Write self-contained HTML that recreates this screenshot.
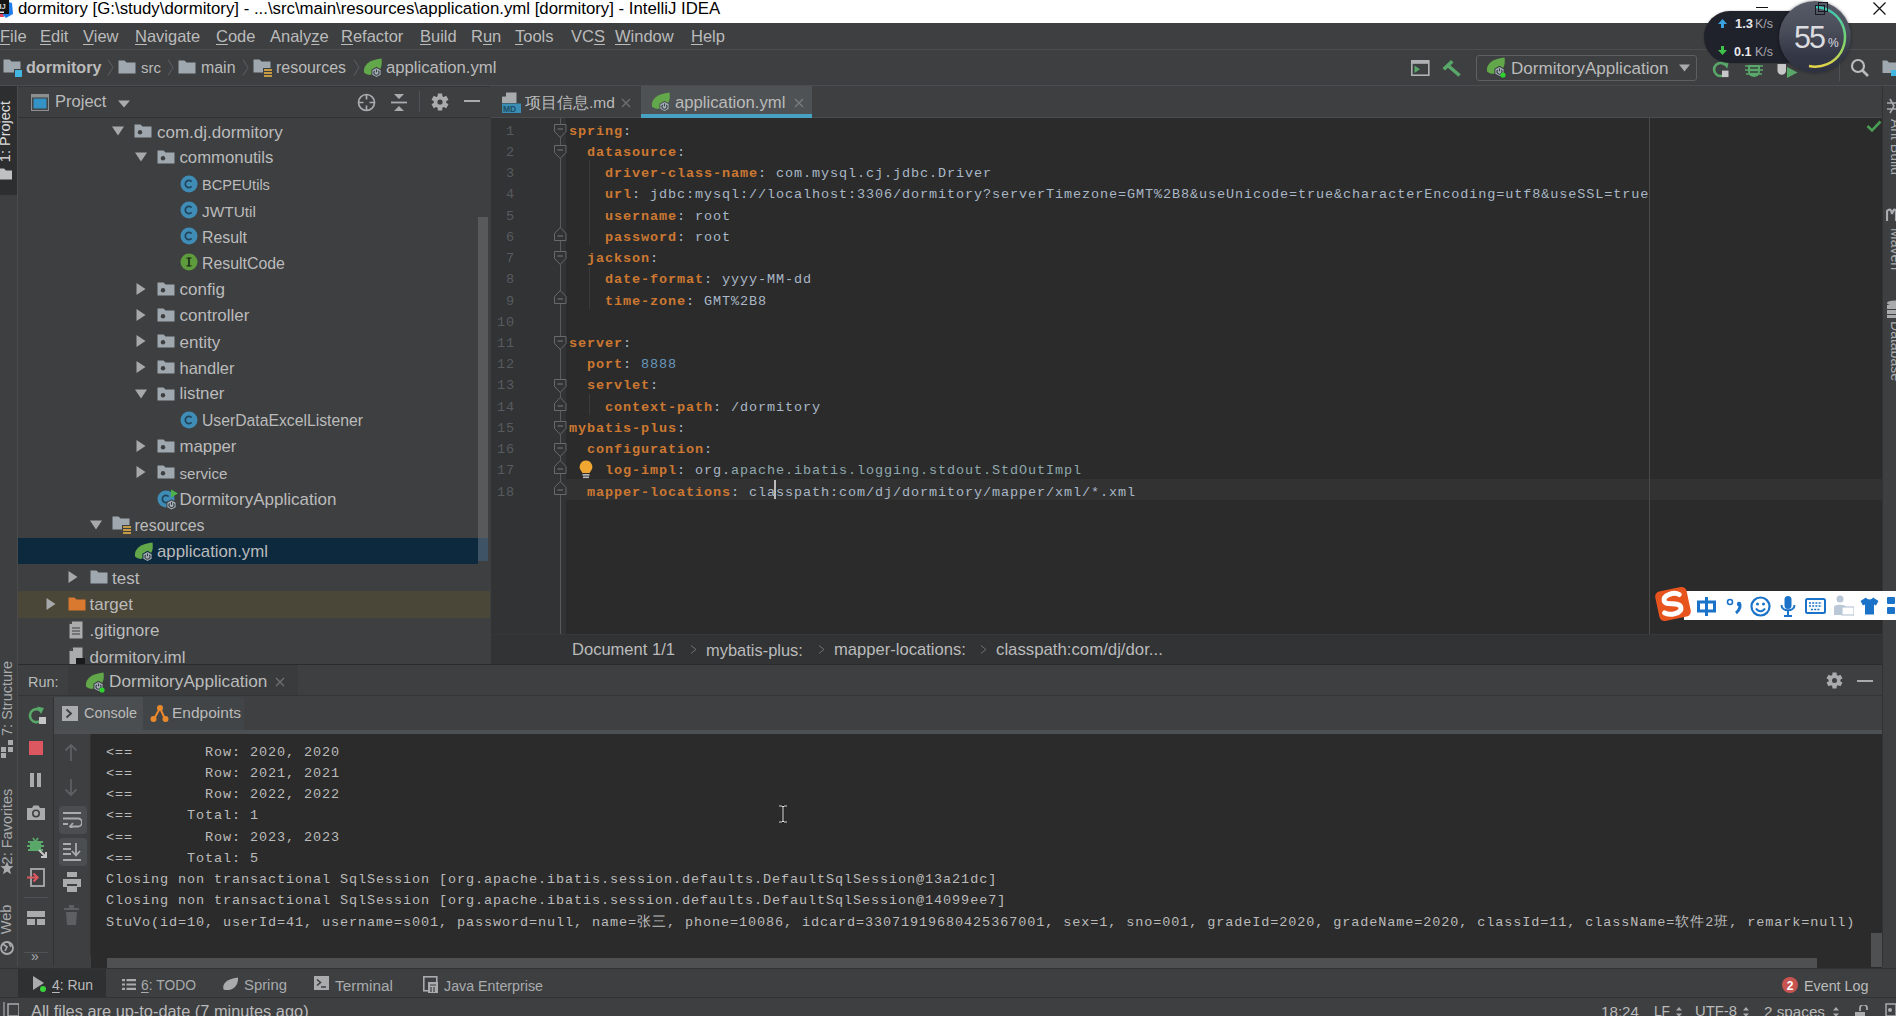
<!DOCTYPE html>
<html><head><meta charset="utf-8"><title>IntelliJ IDEA</title>
<style>
html,body{margin:0;padding:0;width:1896px;height:1016px;overflow:hidden;background:#3D3F41;font-family:"Liberation Sans",sans-serif;}
.a{position:absolute;display:block;}
.t{position:absolute;white-space:pre;}
u{text-decoration:underline;text-decoration-thickness:1px;text-underline-offset:1.5px;}
</style></head><body>
<div class="a" style="left:0px;top:0px;width:1896px;height:23px;background:#FFFFFF;"></div><div class="t" style="left:18px;top:0.78px;font-size:16.8px;line-height:16.8px;color:#000000;font-family:'Liberation Sans',sans-serif;font-weight:normal;">dormitory [G:\study\dormitory] - ...\src\main\resources\application.yml [dormitory] - IntelliJ IDEA</div><svg class="a" style="left:0px;top:0px;" width="14" height="19" viewBox="0 0 14 19"><path d="M0 14 L3 13 L4 17 L0 17 Z" fill="#E0405A"/><path d="M5 1 L12 3 L13 14 L6 18 L3 15 Z" fill="#1F7CE8"/><rect x="0" y="0" width="9" height="14" fill="#141414"/><text x="-0.5" y="8.5" font-size="7.5" font-family="Liberation Sans" font-weight="bold" fill="#DDDDDD">IJ</text><rect x="0" y="11.5" width="4" height="1.5" fill="#EEEEEE"/></svg><div class="a" style="left:1756px;top:7px;width:12px;height:1px;background:#111;"></div><svg class="a" style="left:1815px;top:3px;" width="13" height="12" viewBox="0 0 13 12"><rect x="3" y="0.5" width="9" height="9" fill="none" stroke="#111"/><rect x="0.5" y="2.5" width="9" height="9" fill="#fff" stroke="#111"/></svg><svg class="a" style="left:1872px;top:1px;" width="15" height="15" viewBox="0 0 15 15"><path d="M1.5 1.5 L13.5 13.5 M13.5 1.5 L1.5 13.5" stroke="#111" stroke-width="1.2"/></svg><div class="a" style="left:0px;top:23px;width:1896px;height:27px;background:#3D3F41;"></div><div class="a" style="left:0px;top:49px;width:1896px;height:1px;background:#4B4D4F;"></div><div class="t" style="left:0px;top:28.03px;font-size:16.5px;line-height:16.5px;color:#BBBBBB;font-family:'Liberation Sans',sans-serif;font-weight:normal;"><u>F</u>ile</div><div class="t" style="left:40px;top:28.03px;font-size:16.5px;line-height:16.5px;color:#BBBBBB;font-family:'Liberation Sans',sans-serif;font-weight:normal;"><u>E</u>dit</div><div class="t" style="left:83px;top:28.03px;font-size:16.5px;line-height:16.5px;color:#BBBBBB;font-family:'Liberation Sans',sans-serif;font-weight:normal;"><u>V</u>iew</div><div class="t" style="left:135px;top:28.03px;font-size:16.5px;line-height:16.5px;color:#BBBBBB;font-family:'Liberation Sans',sans-serif;font-weight:normal;"><u>N</u>avigate</div><div class="t" style="left:216px;top:28.03px;font-size:16.5px;line-height:16.5px;color:#BBBBBB;font-family:'Liberation Sans',sans-serif;font-weight:normal;"><u>C</u>ode</div><div class="t" style="left:270px;top:28.03px;font-size:16.5px;line-height:16.5px;color:#BBBBBB;font-family:'Liberation Sans',sans-serif;font-weight:normal;">Analy<u>z</u>e</div><div class="t" style="left:341px;top:28.03px;font-size:16.5px;line-height:16.5px;color:#BBBBBB;font-family:'Liberation Sans',sans-serif;font-weight:normal;"><u>R</u>efactor</div><div class="t" style="left:420px;top:28.03px;font-size:16.5px;line-height:16.5px;color:#BBBBBB;font-family:'Liberation Sans',sans-serif;font-weight:normal;"><u>B</u>uild</div><div class="t" style="left:471px;top:28.03px;font-size:16.5px;line-height:16.5px;color:#BBBBBB;font-family:'Liberation Sans',sans-serif;font-weight:normal;">R<u>u</u>n</div><div class="t" style="left:515px;top:28.03px;font-size:16.5px;line-height:16.5px;color:#BBBBBB;font-family:'Liberation Sans',sans-serif;font-weight:normal;"><u>T</u>ools</div><div class="t" style="left:571px;top:28.03px;font-size:16.5px;line-height:16.5px;color:#BBBBBB;font-family:'Liberation Sans',sans-serif;font-weight:normal;">VC<u>S</u></div><div class="t" style="left:615px;top:28.03px;font-size:16.5px;line-height:16.5px;color:#BBBBBB;font-family:'Liberation Sans',sans-serif;font-weight:normal;"><u>W</u>indow</div><div class="t" style="left:691px;top:28.03px;font-size:16.5px;line-height:16.5px;color:#BBBBBB;font-family:'Liberation Sans',sans-serif;font-weight:normal;"><u>H</u>elp</div><div class="a" style="left:0px;top:50px;width:1896px;height:36px;background:#3D3F41;"></div><div class="a" style="left:0px;top:85px;width:1896px;height:1px;background:#4A4D4F;"></div><svg class="a" style="left:3px;top:59px;" width="20" height="18" viewBox="0 0 20 18"><path d="M0.5 0.5 H6.5 L8.5 2.5 H17.5 V13.5 H0.5 Z" fill="#9FA8AE"/><rect x="11" y="10" width="8" height="8" fill="#3D3F41"/><rect x="12" y="11" width="7" height="7" fill="#40B6E0"/></svg><div class="t" style="left:26px;top:59.31px;font-size:16.177849203160573px;line-height:16.177849203160573px;color:#BBBBBB;font-family:'Liberation Sans',sans-serif;font-weight:bold;">dormitory</div><svg class="a" style="left:107px;top:59px;" width="7" height="17" viewBox="0 0 7 17"><path d="M1 0.5 L6 8.5 L1 16.5" fill="none" stroke="#5E6163" stroke-width="1"/></svg><svg class="a" style="left:118px;top:58.5px;" width="18" height="16" viewBox="0 0 18 16"><path d="M0.5 1.5 H6.5 L8.5 3.5 H17.5 V14.5 H0.5 Z" fill="#9FA8AE"/></svg><div class="t" style="left:141px;top:60.30px;font-size:15.004102684327746px;line-height:15.004102684327746px;color:#BBBBBB;font-family:'Liberation Sans',sans-serif;font-weight:normal;">src</div><svg class="a" style="left:167px;top:59px;" width="7" height="17" viewBox="0 0 7 17"><path d="M1 0.5 L6 8.5 L1 16.5" fill="none" stroke="#5E6163" stroke-width="1"/></svg><svg class="a" style="left:178px;top:58.5px;" width="18" height="16" viewBox="0 0 18 16"><path d="M0.5 1.5 H6.5 L8.5 3.5 H17.5 V14.5 H0.5 Z" fill="#9FA8AE"/></svg><div class="t" style="left:201px;top:59.53px;font-size:15.91810251604066px;line-height:15.91810251604066px;color:#BBBBBB;font-family:'Liberation Sans',sans-serif;font-weight:normal;">main</div><svg class="a" style="left:242px;top:59px;" width="7" height="17" viewBox="0 0 7 17"><path d="M1 0.5 L6 8.5 L1 16.5" fill="none" stroke="#5E6163" stroke-width="1"/></svg><svg class="a" style="left:253px;top:59px;" width="20" height="18" viewBox="0 0 20 18"><path d="M0.5 0.5 H6.5 L8.5 2.5 H17.5 V13.5 H0.5 Z" fill="#9FA8AE"/><rect x="10" y="9" width="10" height="9" fill="#3D3F41"/><rect x="11" y="10" width="8" height="2" fill="#C49A45"/><rect x="11" y="13" width="8" height="2" fill="#C49A45"/><rect x="11" y="16" width="8" height="2" fill="#C49A45"/></svg><div class="t" style="left:276px;top:59.50px;font-size:15.944195316392625px;line-height:15.944195316392625px;color:#BBBBBB;font-family:'Liberation Sans',sans-serif;font-weight:normal;">resources</div><svg class="a" style="left:353px;top:59px;" width="7" height="17" viewBox="0 0 7 17"><path d="M1 0.5 L6 8.5 L1 16.5" fill="none" stroke="#5E6163" stroke-width="1"/></svg><svg class="a" style="left:363px;top:58px;" width="20" height="21" viewBox="0 0 20 21"><path d="M1 14.5 C0 7 6 2 18.5 0.5 C19.5 7 18 12 13.5 15 C9.5 17.5 4 17.5 1 14.5 Z" fill="#62A84A"/><path d="M13.5 8.8 L18.6 11.7 V17.3 L13.5 20.2 L8.4 17.3 V11.7 Z" fill="#3D3F41"/><path d="M13.5 10 L17.6 12.3 V16.7 L13.5 19 L9.4 16.7 V12.3 Z" fill="#A3AEB6"/><path d="M11.7 12.9 A2.5 2.5 0 1 0 15.3 12.9" fill="none" stroke="#3A4046" stroke-width="1.1"/><path d="M13.5 11.4 V14.3" stroke="#3A4046" stroke-width="1.1"/></svg><div class="t" style="left:386px;top:59.86px;font-size:16.70722199910227px;line-height:16.70722199910227px;color:#BBBBBB;font-family:'Liberation Sans',sans-serif;font-weight:normal;">application.yml</div><svg class="a" style="left:1411px;top:60px;" width="19" height="16" viewBox="0 0 19 16"><rect x="0.8" y="0.8" width="17" height="14.4" fill="none" stroke="#AFB1B3" stroke-width="1.6"/><rect x="0.8" y="0.8" width="17" height="3" fill="#AFB1B3"/><path d="M3.5 5.5 L9 9.3 L3.5 13 Z" fill="#59A869"/></svg><svg class="a" style="left:1441px;top:57px;" width="21" height="21" viewBox="0 0 21 21"><path d="M1.5 11 L10 3 L12.5 5.5 L4 13.5 Z" fill="#59A869"/><path d="M7 8.5 L18.5 18.5" stroke="#59A869" stroke-width="3.6"/></svg><div class="a" style="left:1476px;top:55px;width:221px;height:26px;border:1px solid #5E6060;border-radius:3px;box-sizing:border-box;background:#3D3F41"></div><svg class="a" style="left:1486px;top:57px;" width="20" height="21" viewBox="0 0 20 21"><path d="M1 14.5 C0 7 6 2 18.5 0.5 C19.5 7 18 12 13.5 15 C9.5 17.5 4 17.5 1 14.5 Z" fill="#62A84A"/><path d="M13.5 8.8 L18.6 11.7 V17.3 L13.5 20.2 L8.4 17.3 V11.7 Z" fill="#3D3F41"/><path d="M13.5 10 L17.6 12.3 V16.7 L13.5 19 L9.4 16.7 V12.3 Z" fill="#A3AEB6"/><path d="M11.7 12.9 A2.5 2.5 0 1 0 15.3 12.9" fill="none" stroke="#3A4046" stroke-width="1.1"/><path d="M13.5 11.4 V14.3" stroke="#3A4046" stroke-width="1.1"/><circle cx="17" cy="18" r="2.6" fill="#2FD12F"/></svg><div class="t" style="left:1511px;top:59.55px;font-size:17.0728815568842px;line-height:17.0728815568842px;color:#BBBBBB;font-family:'Liberation Sans',sans-serif;font-weight:normal;">DormitoryApplication</div><svg class="a" style="left:1679px;top:64px;" width="11" height="8" viewBox="0 0 11 8"><path d="M0 0.5 H11 L5.5 7.5 Z" fill="#A9ABAD"/></svg><svg class="a" style="left:1711px;top:60px;" width="20" height="20" viewBox="0 0 20 20"><path d="M14.2 4.9 A6.5 6.5 0 1 0 14.2 14.1" fill="none" stroke="#59A869" stroke-width="2.6"/><path d="M10.5 1.5 L17.8 1.8 L16.2 8.8 Z" fill="#59A869"/><rect x="11" y="10.6" width="6.5" height="6.5" fill="#C8C8C8"/></svg><svg class="a" style="left:1745px;top:63px;" width="18" height="15" viewBox="0 0 18 15"><path d="M3 2 H15 V8 A6 6 0 0 1 3 8 Z" fill="#59A869"/><path d="M0 3 H18 M0 7 H18 M1 11 H17" stroke="#59A869" stroke-width="1.6"/><path d="M5 5 H13 M5 9 H13" stroke="#3D3F41" stroke-width="1.5"/></svg><svg class="a" style="left:1777px;top:63px;" width="21" height="16" viewBox="0 0 21 16"><path d="M0.5 1 H9 V7.5 A4.25 4.25 0 0 1 0.5 7.5 Z" fill="#C8C8C8"/><path d="M10 4 L20.5 9.5 L10 15 Z" fill="#59A869"/></svg><div class="a" style="left:1839px;top:57px;width:1px;height:24px;background:#505355;"></div><svg class="a" style="left:1850px;top:58px;" width="20" height="20" viewBox="0 0 20 20"><circle cx="8" cy="8" r="6" fill="none" stroke="#BBBBBB" stroke-width="2.2"/><path d="M12.5 12.5 L18 18" stroke="#BBBBBB" stroke-width="2.6"/></svg><svg class="a" style="left:1882px;top:60px;" width="14" height="18" viewBox="0 0 14 18"><path d="M0.5 0.5 H5 L7 2.5 H14 V13 H0.5 Z" fill="#9FA8AE"/><rect x="9" y="10" width="5" height="6" fill="#40B6E0"/></svg><div class="a" style="left:0px;top:86px;width:17px;height:880px;background:#3D3F41;"></div><div class="a" style="left:17px;top:86px;width:1px;height:880px;background:#4A4C4E;"></div><div class="a" style="left:0px;top:86px;width:17px;height:109px;background:#2C2E30;"></div><div class="t" style="left:-35px;top:123px;width:80px;height:17px;transform:rotate(-90deg);font-size:14.5px;line-height:17px;color:#DDDDDD;text-align:center">1: Project</div><svg class="a" style="left:0px;top:168px;" width="12" height="12" viewBox="0 0 12 12"><path d="M0 0.5 H4 L6 2.5 H12 V11.5 H0 Z" fill="#BEC0C2"/></svg><div class="t" style="left:-43.5px;top:690px;width:100px;height:17px;transform:rotate(-90deg);font-size:14.5px;line-height:17px;color:#A9ABAD;text-align:center">7: Structure</div><svg class="a" style="left:1px;top:739px;" width="12" height="19" viewBox="0 0 12 19"><rect x="7" y="1" width="5" height="5" fill="#A9ABAD"/><rect x="0" y="8" width="5" height="5" fill="#A9ABAD"/><rect x="7" y="8" width="5" height="5" fill="#A9ABAD"/><rect x="0" y="14" width="5" height="5" fill="#A9ABAD"/></svg><div class="t" style="left:-43.5px;top:818px;width:100px;height:17px;transform:rotate(-90deg);font-size:14.5px;line-height:17px;color:#A9ABAD;text-align:center">2: Favorites</div><svg class="a" style="left:0px;top:861px;" width="14" height="14" viewBox="0 0 14 14"><path d="M7 0.5 L8.8 5 L13.5 5.2 L9.8 8.2 L11 13.2 L7 10.5 L3 13.2 L4.2 8.2 L0.5 5.2 L5.2 5 Z" fill="#A9ABAD"/></svg><div class="t" style="left:-24.5px;top:911px;width:60px;height:17px;transform:rotate(-90deg);font-size:14.5px;line-height:17px;color:#A9ABAD;text-align:center">Web</div><svg class="a" style="left:0px;top:940px;" width="14" height="16" viewBox="0 0 14 16"><circle cx="7" cy="8" r="6" fill="none" stroke="#A9ABAD" stroke-width="1.8"/><path d="M3 4 L7 7 L5 11 M9 3 L11 7" stroke="#A9ABAD" stroke-width="1.6" fill="none"/></svg><div class="a" style="left:1882px;top:86px;width:14px;height:880px;background:#3D3F41;"></div><div class="a" style="left:1882px;top:86px;width:1px;height:880px;background:#323232;"></div><div class="t" style="left:1856px;top:139px;width:80px;height:16px;transform:rotate(90deg);font-size:14px;line-height:16px;color:#A9ABAD;text-align:center">Ant Build</div><div class="t" style="left:1866px;top:241px;width:60px;height:16px;transform:rotate(90deg);font-size:14px;line-height:16px;color:#A9ABAD;text-align:center">Maven</div><div class="t" style="left:1856px;top:343px;width:80px;height:16px;transform:rotate(90deg);font-size:14px;line-height:16px;color:#A9ABAD;text-align:center">Database</div><svg class="a" style="left:1886px;top:98px;" width="10" height="16" viewBox="0 0 10 16"><path d="M4 1 L8 8 L4 15 M1 5 H10 M1 11 H10" stroke="#A9ABAD" stroke-width="1.6" fill="none"/></svg><svg class="a" style="left:1886px;top:208px;" width="10" height="14" viewBox="0 0 10 14"><path d="M1 13 V3 Q5 -1 6 6 Q8 -1 10 3 V13" stroke="#A9ABAD" stroke-width="2.2" fill="none"/></svg><svg class="a" style="left:1886px;top:300px;" width="10" height="18" viewBox="0 0 10 18"><ellipse cx="9" cy="3" rx="8" ry="2.5" fill="#A9ABAD"/><rect x="1" y="5" width="9" height="4" fill="#A9ABAD"/><rect x="1" y="10" width="9" height="4" fill="#A9ABAD"/><rect x="1" y="15" width="9" height="3" fill="#A9ABAD"/></svg><div class="a" style="left:18px;top:86px;width:472px;height:578px;background:#3D3F41;"></div><div class="a" style="left:18px;top:86px;width:472px;height:1px;background:#333537;"></div><div class="a" style="left:18px;top:117px;width:472px;height:1px;background:#323232;"></div><svg class="a" style="left:31px;top:94px;" width="18" height="17" viewBox="0 0 18 17"><rect x="0.5" y="0.5" width="17" height="16" fill="none" stroke="#8C8E90" stroke-width="1.2"/><rect x="1" y="1" width="16" height="2.5" fill="#8C8E90"/><rect x="2.5" y="4.5" width="13" height="10" fill="#3592C4"/></svg><div class="t" style="left:55px;top:93.99px;font-size:16.547846169294104px;line-height:16.547846169294104px;color:#BBBBBB;font-family:'Liberation Sans',sans-serif;font-weight:normal;">Project</div><svg class="a" style="left:118px;top:100px;" width="12" height="8" viewBox="0 0 12 8"><path d="M0 0.5 H12 L6 7.5 Z" fill="#A9ABAD"/></svg><svg class="a" style="left:357px;top:93px;" width="19" height="19" viewBox="0 0 19 19"><circle cx="9.5" cy="9.5" r="8" fill="none" stroke="#A9ABAD" stroke-width="1.7"/><path d="M9.5 2 V6.5 M9.5 12.5 V17 M2 9.5 H6.5 M12.5 9.5 H17" stroke="#A9ABAD" stroke-width="1.7"/></svg><svg class="a" style="left:391px;top:93px;" width="16" height="19" viewBox="0 0 16 19"><path d="M0 9.5 H16" stroke="#A9ABAD" stroke-width="1.8"/><path d="M3 1 H13 L8 6 Z M3 18 H13 L8 13 Z" fill="#A9ABAD"/></svg><div class="a" style="left:419px;top:91px;width:1px;height:21px;background:#505355;"></div><svg class="a" style="left:431px;top:93px;" width="18" height="18" viewBox="0 0 18 18"><path d="M6.63 3.27 L6.81 0.48 L11.19 0.48 L11.37 3.27 L12.77 4.08 L15.29 2.84 L17.48 6.63 L15.15 8.19 L15.15 9.81 L17.48 11.37 L15.29 15.16 L12.77 13.92 L11.37 14.73 L11.19 17.52 L6.81 17.52 L6.63 14.73 L5.23 13.92 L2.71 15.16 L0.52 11.37 L2.85 9.81 L2.85 8.19 L0.52 6.63 L2.71 2.84 L5.23 4.08 Z" fill="#A9ABAD"/><circle cx="9" cy="9" r="2.6" fill="#3D3F41"/></svg><div class="a" style="left:464px;top:100px;width:16px;height:2px;background:#A9ABAD;"></div><div class="a" style="left:18px;top:538.0px;width:460px;height:26px;background:#0D293E;"></div><div class="a" style="left:18px;top:590.5px;width:472px;height:27px;background:#4A4638;"></div><div class="a" style="left:478px;top:217px;width:10px;height:343px;background:#57595B;"></div><div class="a" style="left:478px;top:538.0px;width:10px;height:23px;background:#3E5366;"></div><svg class="a" style="left:112.0px;top:126.0px;" width="12" height="10" viewBox="0 0 12 10"><path d="M0 0.5 H12 L6 9.5 Z" fill="#A6A8AA"/></svg><svg class="a" style="left:134.0px;top:123.0px;" width="18" height="16" viewBox="0 0 18 16"><path d="M0.5 1.5 H6.5 L8.5 3.5 H17.5 V14.5 H0.5 Z" fill="#9FA8AE"/><circle cx="6" cy="9.2" r="2.2" fill="#3D3F41"/></svg><div class="t" style="left:157.0px;top:123.61px;font-size:17px;line-height:17px;color:#BBBBBB;font-family:'Liberation Sans',sans-serif;font-weight:normal;">com.dj.dormitory</div><svg class="a" style="left:134.5px;top:152.25px;" width="12" height="10" viewBox="0 0 12 10"><path d="M0 0.5 H12 L6 9.5 Z" fill="#A6A8AA"/></svg><svg class="a" style="left:156.5px;top:149.25px;" width="18" height="16" viewBox="0 0 18 16"><path d="M0.5 1.5 H6.5 L8.5 3.5 H17.5 V14.5 H0.5 Z" fill="#9FA8AE"/><circle cx="6" cy="9.2" r="2.2" fill="#3D3F41"/></svg><div class="t" style="left:179.5px;top:150.07px;font-size:16.748329621380847px;line-height:16.748329621380847px;color:#BBBBBB;font-family:'Liberation Sans',sans-serif;font-weight:normal;">commonutils</div><svg class="a" style="left:180.0px;top:174.5px;" width="18" height="18" viewBox="0 0 18 18"><circle cx="9" cy="9" r="8.5" fill="#3F8DB6"/><path d="M11.6 6.6 A3.6 3.6 0 1 0 11.6 11.4" fill="none" stroke="#21445A" stroke-width="1.7"/></svg><div class="t" style="left:202.0px;top:178.17px;font-size:14.568339303049576px;line-height:14.568339303049576px;color:#BBBBBB;font-family:'Liberation Sans',sans-serif;font-weight:normal;">BCPEUtils</div><svg class="a" style="left:180.0px;top:200.75px;" width="18" height="18" viewBox="0 0 18 18"><circle cx="9" cy="9" r="8.5" fill="#3F8DB6"/><path d="M11.6 6.6 A3.6 3.6 0 1 0 11.6 11.4" fill="none" stroke="#21445A" stroke-width="1.7"/></svg><div class="t" style="left:202.0px;top:203.69px;font-size:15.432705188889882px;line-height:15.432705188889882px;color:#BBBBBB;font-family:'Liberation Sans',sans-serif;font-weight:normal;">JWTUtil</div><svg class="a" style="left:180.0px;top:227.0px;" width="18" height="18" viewBox="0 0 18 18"><circle cx="9" cy="9" r="8.5" fill="#3F8DB6"/><path d="M11.6 6.6 A3.6 3.6 0 1 0 11.6 11.4" fill="none" stroke="#21445A" stroke-width="1.7"/></svg><div class="t" style="left:202.0px;top:229.56px;font-size:15.876515986769569px;line-height:15.876515986769569px;color:#BBBBBB;font-family:'Liberation Sans',sans-serif;font-weight:normal;">Result</div><svg class="a" style="left:180.0px;top:253.25px;" width="18" height="18" viewBox="0 0 18 18"><circle cx="9" cy="9" r="8.5" fill="#5E9B3C"/><rect x="8" y="4.5" width="2" height="9" fill="#233A1A"/><rect x="6.5" y="4.5" width="5" height="1.3" fill="#233A1A"/><rect x="6.5" y="12.2" width="5" height="1.3" fill="#233A1A"/></svg><div class="t" style="left:202.0px;top:255.80px;font-size:15.885642513233051px;line-height:15.885642513233051px;color:#BBBBBB;font-family:'Liberation Sans',sans-serif;font-weight:normal;">ResultCode</div><svg class="a" style="left:135.5px;top:282.5px;" width="10" height="12" viewBox="0 0 10 12"><path d="M0.5 0 V12 L9.5 6 Z" fill="#A6A8AA"/></svg><svg class="a" style="left:156.5px;top:280.5px;" width="18" height="16" viewBox="0 0 18 16"><path d="M0.5 1.5 H6.5 L8.5 3.5 H17.5 V14.5 H0.5 Z" fill="#9FA8AE"/><circle cx="6" cy="9.2" r="2.2" fill="#3D3F41"/></svg><div class="t" style="left:179.5px;top:281.11px;font-size:17px;line-height:17px;color:#BBBBBB;font-family:'Liberation Sans',sans-serif;font-weight:normal;">config</div><svg class="a" style="left:135.5px;top:308.75px;" width="10" height="12" viewBox="0 0 10 12"><path d="M0.5 0 V12 L9.5 6 Z" fill="#A6A8AA"/></svg><svg class="a" style="left:156.5px;top:306.75px;" width="18" height="16" viewBox="0 0 18 16"><path d="M0.5 1.5 H6.5 L8.5 3.5 H17.5 V14.5 H0.5 Z" fill="#9FA8AE"/><circle cx="6" cy="9.2" r="2.2" fill="#3D3F41"/></svg><div class="t" style="left:179.5px;top:307.36px;font-size:17px;line-height:17px;color:#BBBBBB;font-family:'Liberation Sans',sans-serif;font-weight:normal;">controller</div><svg class="a" style="left:135.5px;top:335.0px;" width="10" height="12" viewBox="0 0 10 12"><path d="M0.5 0 V12 L9.5 6 Z" fill="#A6A8AA"/></svg><svg class="a" style="left:156.5px;top:333.0px;" width="18" height="16" viewBox="0 0 18 16"><path d="M0.5 1.5 H6.5 L8.5 3.5 H17.5 V14.5 H0.5 Z" fill="#9FA8AE"/><circle cx="6" cy="9.2" r="2.2" fill="#3D3F41"/></svg><div class="t" style="left:179.5px;top:333.61px;font-size:17px;line-height:17px;color:#BBBBBB;font-family:'Liberation Sans',sans-serif;font-weight:normal;">entity</div><svg class="a" style="left:135.5px;top:361.25px;" width="10" height="12" viewBox="0 0 10 12"><path d="M0.5 0 V12 L9.5 6 Z" fill="#A6A8AA"/></svg><svg class="a" style="left:156.5px;top:359.25px;" width="18" height="16" viewBox="0 0 18 16"><path d="M0.5 1.5 H6.5 L8.5 3.5 H17.5 V14.5 H0.5 Z" fill="#9FA8AE"/><circle cx="6" cy="9.2" r="2.2" fill="#3D3F41"/></svg><div class="t" style="left:179.5px;top:360.29px;font-size:16.488664043470116px;line-height:16.488664043470116px;color:#BBBBBB;font-family:'Liberation Sans',sans-serif;font-weight:normal;">handler</div><svg class="a" style="left:134.5px;top:388.5px;" width="12" height="10" viewBox="0 0 12 10"><path d="M0 0.5 H12 L6 9.5 Z" fill="#A6A8AA"/></svg><svg class="a" style="left:156.5px;top:385.5px;" width="18" height="16" viewBox="0 0 18 16"><path d="M0.5 1.5 H6.5 L8.5 3.5 H17.5 V14.5 H0.5 Z" fill="#9FA8AE"/><circle cx="6" cy="9.2" r="2.2" fill="#3D3F41"/></svg><div class="t" style="left:179.5px;top:386.22px;font-size:16.87071641965907px;line-height:16.87071641965907px;color:#BBBBBB;font-family:'Liberation Sans',sans-serif;font-weight:normal;">listner</div><svg class="a" style="left:180.0px;top:410.75px;" width="18" height="18" viewBox="0 0 18 18"><circle cx="9" cy="9" r="8.5" fill="#3F8DB6"/><path d="M11.6 6.6 A3.6 3.6 0 1 0 11.6 11.4" fill="none" stroke="#21445A" stroke-width="1.7"/></svg><div class="t" style="left:202.0px;top:413.42px;font-size:15.744037159839259px;line-height:15.744037159839259px;color:#BBBBBB;font-family:'Liberation Sans',sans-serif;font-weight:normal;">UserDataExcelListener</div><svg class="a" style="left:135.5px;top:440.0px;" width="10" height="12" viewBox="0 0 10 12"><path d="M0.5 0 V12 L9.5 6 Z" fill="#A6A8AA"/></svg><svg class="a" style="left:156.5px;top:438.0px;" width="18" height="16" viewBox="0 0 18 16"><path d="M0.5 1.5 H6.5 L8.5 3.5 H17.5 V14.5 H0.5 Z" fill="#9FA8AE"/><circle cx="6" cy="9.2" r="2.2" fill="#3D3F41"/></svg><div class="t" style="left:179.5px;top:438.77px;font-size:16.81260945709282px;line-height:16.81260945709282px;color:#BBBBBB;font-family:'Liberation Sans',sans-serif;font-weight:normal;">mapper</div><svg class="a" style="left:135.5px;top:466.25px;" width="10" height="12" viewBox="0 0 10 12"><path d="M0.5 0 V12 L9.5 6 Z" fill="#A6A8AA"/></svg><svg class="a" style="left:156.5px;top:464.25px;" width="18" height="16" viewBox="0 0 18 16"><path d="M0.5 1.5 H6.5 L8.5 3.5 H17.5 V14.5 H0.5 Z" fill="#9FA8AE"/><circle cx="6" cy="9.2" r="2.2" fill="#3D3F41"/></svg><div class="t" style="left:179.5px;top:466.42px;font-size:15.15465443244043px;line-height:15.15465443244043px;color:#BBBBBB;font-family:'Liberation Sans',sans-serif;font-weight:normal;">service</div><svg class="a" style="left:156.5px;top:488.5px;" width="22" height="22" viewBox="0 0 22 22"><circle cx="9" cy="10" r="8.5" fill="#3F8DB6"/><path d="M11.6 7.6 A3.6 3.6 0 1 0 11.6 12.4" fill="none" stroke="#21445A" stroke-width="1.7"/><path d="M14 0.5 L21 4.5 L14 8.5 Z" fill="#4CB34C"/><path d="M14.5 10.3 L19.6 13.2 V18.8 L14.5 21.7 L9.4 18.8 V13.2 Z" fill="#3D3F41"/><path d="M14.5 11.5 L18.6 13.8 V18.2 L14.5 20.5 L10.4 18.2 V13.8 Z" fill="#A3AEB6"/><path d="M12.7 14.4 A2.5 2.5 0 1 0 16.3 14.4" fill="none" stroke="#3A4046" stroke-width="1.1"/><path d="M14.5 12.9 V15.8" stroke="#3A4046" stroke-width="1.1"/></svg><div class="t" style="left:179.5px;top:491.11px;font-size:17px;line-height:17px;color:#BBBBBB;font-family:'Liberation Sans',sans-serif;font-weight:normal;">DormitoryApplication</div><svg class="a" style="left:89.5px;top:519.75px;" width="12" height="10" viewBox="0 0 12 10"><path d="M0 0.5 H12 L6 9.5 Z" fill="#A6A8AA"/></svg><svg class="a" style="left:111.5px;top:515.75px;" width="20" height="18" viewBox="0 0 20 18"><path d="M0.5 0.5 H6.5 L8.5 2.5 H17.5 V13.5 H0.5 Z" fill="#9FA8AE"/><rect x="10" y="9" width="10" height="9" fill="#3D3F41"/><rect x="11" y="10" width="8" height="2" fill="#C49A45"/><rect x="11" y="13" width="8" height="2" fill="#C49A45"/><rect x="11" y="16" width="8" height="2" fill="#C49A45"/></svg><div class="t" style="left:134.5px;top:518.25px;font-size:15.944195316392625px;line-height:15.944195316392625px;color:#BBBBBB;font-family:'Liberation Sans',sans-serif;font-weight:normal;">resources</div><svg class="a" style="left:134.0px;top:542.0px;" width="20" height="21" viewBox="0 0 20 21"><path d="M1 14.5 C0 7 6 2 18.5 0.5 C19.5 7 18 12 13.5 15 C9.5 17.5 4 17.5 1 14.5 Z" fill="#62A84A"/><path d="M13.5 8.8 L18.6 11.7 V17.3 L13.5 20.2 L8.4 17.3 V11.7 Z" fill="#0D293E"/><path d="M13.5 10 L17.6 12.3 V16.7 L13.5 19 L9.4 16.7 V12.3 Z" fill="#A3AEB6"/><path d="M11.7 12.9 A2.5 2.5 0 1 0 15.3 12.9" fill="none" stroke="#3A4046" stroke-width="1.1"/><path d="M13.5 11.4 V14.3" stroke="#3A4046" stroke-width="1.1"/></svg><div class="t" style="left:157px;top:543.79px;font-size:16.782820288690967px;line-height:16.782820288690967px;color:#BBBBBB;font-family:'Liberation Sans',sans-serif;font-weight:normal;">application.yml</div><svg class="a" style="left:68.0px;top:571.25px;" width="10" height="12" viewBox="0 0 10 12"><path d="M0.5 0 V12 L9.5 6 Z" fill="#A6A8AA"/></svg><svg class="a" style="left:90.0px;top:569.25px;" width="18" height="16" viewBox="0 0 18 16"><path d="M0.5 1.5 H6.5 L8.5 3.5 H17.5 V14.5 H0.5 Z" fill="#9FA8AE"/></svg><div class="t" style="left:112.0px;top:569.86px;font-size:17px;line-height:17px;color:#BBBBBB;font-family:'Liberation Sans',sans-serif;font-weight:normal;">test</div><svg class="a" style="left:45.5px;top:597.5px;" width="10" height="12" viewBox="0 0 10 12"><path d="M0.5 0 V12 L9.5 6 Z" fill="#A6A8AA"/></svg><svg class="a" style="left:67.5px;top:595.5px;" width="18" height="16" viewBox="0 0 18 16"><path d="M0.5 1.5 H6.5 L8.5 3.5 H17.5 V14.5 H0.5 Z" fill="#D9782F"/></svg><div class="t" style="left:89.5px;top:596.11px;font-size:17px;line-height:17px;color:#BBBBBB;font-family:'Liberation Sans',sans-serif;font-weight:normal;">target</div><svg class="a" style="left:68.5px;top:620.75px;" width="14" height="18" viewBox="0 0 14 18"><path d="M3 0.5 H13.5 V17.5 H0.5 V3 Z" fill="#A9ABAD"/><path d="M3 7 H11 M3 10 H11 M3 13 H11" stroke="#3D3F41" stroke-width="1.2"/><path d="M0.5 3 H3 V0.5" fill="#3D3F41"/></svg><div class="t" style="left:89.5px;top:622.36px;font-size:17px;line-height:17px;color:#BBBBBB;font-family:'Liberation Sans',sans-serif;font-weight:normal;">.gitignore</div><svg class="a" style="left:68.5px;top:647.0px;" width="16" height="19" viewBox="0 0 16 19"><path d="M4 0.5 H13.5 V17.5 H0.5 V4 Z" fill="#A9ABAD"/><path d="M0.5 4 H4 V0.5" fill="#3D3F41"/><rect x="7" y="11" width="9" height="8" fill="#1b1b1b"/></svg><div class="t" style="left:89.5px;top:648.61px;font-size:17px;line-height:17px;color:#BBBBBB;font-family:'Liberation Sans',sans-serif;font-weight:normal;">dormitory.iml</div><div class="a" style="left:491px;top:86px;width:1391px;height:32px;background:#3D3F41;"></div><div class="a" style="left:491px;top:117px;width:1391px;height:1px;background:#4A4B4D;"></div><svg class="a" style="left:501px;top:92px;" width="21" height="22" viewBox="0 0 21 22"><path d="M5.5 0.5 H15.5 V11 H1 V5 Z" fill="#A7ABAE"/><path d="M1 4.5 L5 0.5 V4.5 Z" fill="#3D3F41"/><rect x="1" y="11.5" width="19" height="9.5" fill="#3A8DB3"/><text x="2" y="19.8" font-size="8.5" font-family="Liberation Sans" font-weight="bold" fill="#1F4F66">MD</text></svg><div class="t" style="left:525px;top:93px;font-size:15.5px;line-height:20px;color:#BBBBBB;letter-spacing:0px">项目信息.md</div><svg class="a" style="left:621px;top:98px;" width="10" height="10" viewBox="0 0 10 10"><path d="M1 1 L9 9 M9 1 L1 9" stroke="#6E7072" stroke-width="1.3"/></svg><div class="a" style="left:641px;top:86px;width:171px;height:31px;background:#4E5254;"></div><div class="a" style="left:641px;top:114px;width:171px;height:4px;background:#48A0C2;"></div><svg class="a" style="left:651px;top:92px;" width="20" height="21" viewBox="0 0 20 21"><path d="M1 14.5 C0 7 6 2 18.5 0.5 C19.5 7 18 12 13.5 15 C9.5 17.5 4 17.5 1 14.5 Z" fill="#62A84A"/><path d="M13.5 8.8 L18.6 11.7 V17.3 L13.5 20.2 L8.4 17.3 V11.7 Z" fill="#4E5254"/><path d="M13.5 10 L17.6 12.3 V16.7 L13.5 19 L9.4 16.7 V12.3 Z" fill="#A3AEB6"/><path d="M11.7 12.9 A2.5 2.5 0 1 0 15.3 12.9" fill="none" stroke="#3A4046" stroke-width="1.1"/><path d="M13.5 11.4 V14.3" stroke="#3A4046" stroke-width="1.1"/></svg><div class="t" style="left:675px;top:94.86px;font-size:16.70722199910227px;line-height:16.70722199910227px;color:#BBBBBB;font-family:'Liberation Sans',sans-serif;font-weight:normal;">application.yml</div><svg class="a" style="left:794px;top:98px;" width="10" height="10" viewBox="0 0 10 10"><path d="M1 1 L9 9 M9 1 L1 9" stroke="#7A7C7E" stroke-width="1.3"/></svg><div class="a" style="left:491px;top:118px;width:75px;height:516px;background:#313335;"></div><div class="a" style="left:566px;top:118px;width:1316px;height:516px;background:#2B2B2B;"></div><div class="a" style="left:566px;top:478.995px;width:1316px;height:21px;background:#323232;"></div><div class="a" style="left:1649px;top:118px;width:1px;height:516px;background:#4B4B4B;"></div><div class="a" style="left:560px;top:118px;width:1px;height:516px;background:#5A5A5A;"></div><div class="t" style="left:506px;top:124.65px;font-size:13.5px;line-height:13.5px;color:#585B5E;font-family:'Liberation Mono',monospace;font-weight:normal;letter-spacing:0.900px">1</div><div class="t" style="left:569px;top:124.65px;font-size:13.5px;line-height:13.5px;color:#A9B7C6;font-family:'Liberation Mono',monospace;font-weight:normal;letter-spacing:0.900px"><span style="color:#CC7832;font-weight:bold">spring</span><span style="color:#A9B7C6;font-weight:normal">:</span></div><div class="t" style="left:506px;top:145.89px;font-size:13.5px;line-height:13.5px;color:#585B5E;font-family:'Liberation Mono',monospace;font-weight:normal;letter-spacing:0.900px">2</div><div class="t" style="left:569px;top:145.89px;font-size:13.5px;line-height:13.5px;color:#A9B7C6;font-family:'Liberation Mono',monospace;font-weight:normal;letter-spacing:0.900px"><span style="color:#CC7832;font-weight:bold">  datasource</span><span style="color:#A9B7C6;font-weight:normal">:</span></div><div class="t" style="left:506px;top:167.12px;font-size:13.5px;line-height:13.5px;color:#585B5E;font-family:'Liberation Mono',monospace;font-weight:normal;letter-spacing:0.900px">3</div><div class="t" style="left:569px;top:167.12px;font-size:13.5px;line-height:13.5px;color:#A9B7C6;font-family:'Liberation Mono',monospace;font-weight:normal;letter-spacing:0.900px"><span style="color:#CC7832;font-weight:bold">    driver-class-name</span><span style="color:#A9B7C6;font-weight:normal">: com.mysql.cj.jdbc.Driver</span></div><div class="t" style="left:506px;top:188.36px;font-size:13.5px;line-height:13.5px;color:#585B5E;font-family:'Liberation Mono',monospace;font-weight:normal;letter-spacing:0.900px">4</div><div class="t" style="left:569px;top:188.36px;font-size:13.5px;line-height:13.5px;color:#A9B7C6;font-family:'Liberation Mono',monospace;font-weight:normal;letter-spacing:0.900px"><span style="color:#CC7832;font-weight:bold">    url</span><span style="color:#A9B7C6;font-weight:normal">: jdbc:mysql://localhost:3306/dormitory?serverTimezone=GMT%2B8&amp;useUnicode=true&amp;characterEncoding=utf8&amp;useSSL=true</span></div><div class="t" style="left:506px;top:209.59px;font-size:13.5px;line-height:13.5px;color:#585B5E;font-family:'Liberation Mono',monospace;font-weight:normal;letter-spacing:0.900px">5</div><div class="t" style="left:569px;top:209.59px;font-size:13.5px;line-height:13.5px;color:#A9B7C6;font-family:'Liberation Mono',monospace;font-weight:normal;letter-spacing:0.900px"><span style="color:#CC7832;font-weight:bold">    username</span><span style="color:#A9B7C6;font-weight:normal">: root</span></div><div class="t" style="left:506px;top:230.83px;font-size:13.5px;line-height:13.5px;color:#585B5E;font-family:'Liberation Mono',monospace;font-weight:normal;letter-spacing:0.900px">6</div><div class="t" style="left:569px;top:230.83px;font-size:13.5px;line-height:13.5px;color:#A9B7C6;font-family:'Liberation Mono',monospace;font-weight:normal;letter-spacing:0.900px"><span style="color:#CC7832;font-weight:bold">    password</span><span style="color:#A9B7C6;font-weight:normal">: root</span></div><div class="t" style="left:506px;top:252.06px;font-size:13.5px;line-height:13.5px;color:#585B5E;font-family:'Liberation Mono',monospace;font-weight:normal;letter-spacing:0.900px">7</div><div class="t" style="left:569px;top:252.06px;font-size:13.5px;line-height:13.5px;color:#A9B7C6;font-family:'Liberation Mono',monospace;font-weight:normal;letter-spacing:0.900px"><span style="color:#CC7832;font-weight:bold">  jackson</span><span style="color:#A9B7C6;font-weight:normal">:</span></div><div class="t" style="left:506px;top:273.30px;font-size:13.5px;line-height:13.5px;color:#585B5E;font-family:'Liberation Mono',monospace;font-weight:normal;letter-spacing:0.900px">8</div><div class="t" style="left:569px;top:273.30px;font-size:13.5px;line-height:13.5px;color:#A9B7C6;font-family:'Liberation Mono',monospace;font-weight:normal;letter-spacing:0.900px"><span style="color:#CC7832;font-weight:bold">    date-format</span><span style="color:#A9B7C6;font-weight:normal">: yyyy-MM-dd</span></div><div class="t" style="left:506px;top:294.53px;font-size:13.5px;line-height:13.5px;color:#585B5E;font-family:'Liberation Mono',monospace;font-weight:normal;letter-spacing:0.900px">9</div><div class="t" style="left:569px;top:294.53px;font-size:13.5px;line-height:13.5px;color:#A9B7C6;font-family:'Liberation Mono',monospace;font-weight:normal;letter-spacing:0.900px"><span style="color:#CC7832;font-weight:bold">    time-zone</span><span style="color:#A9B7C6;font-weight:normal">: GMT%2B8</span></div><div class="t" style="left:497px;top:315.77px;font-size:13.5px;line-height:13.5px;color:#585B5E;font-family:'Liberation Mono',monospace;font-weight:normal;letter-spacing:0.900px">10</div><div class="t" style="left:497px;top:337.00px;font-size:13.5px;line-height:13.5px;color:#585B5E;font-family:'Liberation Mono',monospace;font-weight:normal;letter-spacing:0.900px">11</div><div class="t" style="left:569px;top:337.00px;font-size:13.5px;line-height:13.5px;color:#A9B7C6;font-family:'Liberation Mono',monospace;font-weight:normal;letter-spacing:0.900px"><span style="color:#CC7832;font-weight:bold">server</span><span style="color:#A9B7C6;font-weight:normal">:</span></div><div class="t" style="left:497px;top:358.24px;font-size:13.5px;line-height:13.5px;color:#585B5E;font-family:'Liberation Mono',monospace;font-weight:normal;letter-spacing:0.900px">12</div><div class="t" style="left:569px;top:358.24px;font-size:13.5px;line-height:13.5px;color:#A9B7C6;font-family:'Liberation Mono',monospace;font-weight:normal;letter-spacing:0.900px"><span style="color:#CC7832;font-weight:bold">  port</span><span style="color:#A9B7C6;font-weight:normal">: </span><span style="color:#6897BB;font-weight:normal">8888</span></div><div class="t" style="left:497px;top:379.47px;font-size:13.5px;line-height:13.5px;color:#585B5E;font-family:'Liberation Mono',monospace;font-weight:normal;letter-spacing:0.900px">13</div><div class="t" style="left:569px;top:379.47px;font-size:13.5px;line-height:13.5px;color:#A9B7C6;font-family:'Liberation Mono',monospace;font-weight:normal;letter-spacing:0.900px"><span style="color:#CC7832;font-weight:bold">  servlet</span><span style="color:#A9B7C6;font-weight:normal">:</span></div><div class="t" style="left:497px;top:400.71px;font-size:13.5px;line-height:13.5px;color:#585B5E;font-family:'Liberation Mono',monospace;font-weight:normal;letter-spacing:0.900px">14</div><div class="t" style="left:569px;top:400.71px;font-size:13.5px;line-height:13.5px;color:#A9B7C6;font-family:'Liberation Mono',monospace;font-weight:normal;letter-spacing:0.900px"><span style="color:#CC7832;font-weight:bold">    context-path</span><span style="color:#A9B7C6;font-weight:normal">: /dormitory</span></div><div class="t" style="left:497px;top:421.94px;font-size:13.5px;line-height:13.5px;color:#585B5E;font-family:'Liberation Mono',monospace;font-weight:normal;letter-spacing:0.900px">15</div><div class="t" style="left:569px;top:421.94px;font-size:13.5px;line-height:13.5px;color:#A9B7C6;font-family:'Liberation Mono',monospace;font-weight:normal;letter-spacing:0.900px"><span style="color:#CC7832;font-weight:bold">mybatis-plus</span><span style="color:#A9B7C6;font-weight:normal">:</span></div><div class="t" style="left:497px;top:443.18px;font-size:13.5px;line-height:13.5px;color:#585B5E;font-family:'Liberation Mono',monospace;font-weight:normal;letter-spacing:0.900px">16</div><div class="t" style="left:569px;top:443.18px;font-size:13.5px;line-height:13.5px;color:#A9B7C6;font-family:'Liberation Mono',monospace;font-weight:normal;letter-spacing:0.900px"><span style="color:#CC7832;font-weight:bold">  configuration</span><span style="color:#A9B7C6;font-weight:normal">:</span></div><div class="t" style="left:497px;top:464.41px;font-size:13.5px;line-height:13.5px;color:#585B5E;font-family:'Liberation Mono',monospace;font-weight:normal;letter-spacing:0.900px">17</div><div class="t" style="left:569px;top:464.41px;font-size:13.5px;line-height:13.5px;color:#A9B7C6;font-family:'Liberation Mono',monospace;font-weight:normal;letter-spacing:0.900px"><span style="color:#CC7832;font-weight:bold">    log-impl</span><span style="color:#A9B7C6;font-weight:normal">: org.</span><span style="color:#8EA9AE;font-weight:normal">apache.ibatis.logging.stdout.StdOutImpl</span></div><div class="t" style="left:497px;top:485.65px;font-size:13.5px;line-height:13.5px;color:#585B5E;font-family:'Liberation Mono',monospace;font-weight:normal;letter-spacing:0.900px">18</div><div class="t" style="left:569px;top:485.65px;font-size:13.5px;line-height:13.5px;color:#A9B7C6;font-family:'Liberation Mono',monospace;font-weight:normal;letter-spacing:0.900px"><span style="color:#CC7832;font-weight:bold">  mapper-locations</span><span style="color:#A9B7C6;font-weight:normal">: classpath:com/dj/dormitory/mapper/xml/*.xml</span></div><svg class="a" style="left:554px;top:124.0px;" width="13" height="15" viewBox="0 0 13 15"><path d="M0.5 0.5 H12 V7.5 L6.25 13.5 L0.5 7.5 Z" fill="#313335" stroke="#6A6A6A" stroke-width="1"/><path d="M3.5 5 H9" stroke="#7A7A7A" stroke-width="1"/></svg><svg class="a" style="left:554px;top:145.235px;" width="13" height="15" viewBox="0 0 13 15"><path d="M0.5 0.5 H12 V7.5 L6.25 13.5 L0.5 7.5 Z" fill="#313335" stroke="#6A6A6A" stroke-width="1"/><path d="M3.5 5 H9" stroke="#7A7A7A" stroke-width="1"/></svg><svg class="a" style="left:554px;top:251.41px;" width="13" height="15" viewBox="0 0 13 15"><path d="M0.5 0.5 H12 V7.5 L6.25 13.5 L0.5 7.5 Z" fill="#313335" stroke="#6A6A6A" stroke-width="1"/><path d="M3.5 5 H9" stroke="#7A7A7A" stroke-width="1"/></svg><svg class="a" style="left:554px;top:336.35px;" width="13" height="15" viewBox="0 0 13 15"><path d="M0.5 0.5 H12 V7.5 L6.25 13.5 L0.5 7.5 Z" fill="#313335" stroke="#6A6A6A" stroke-width="1"/><path d="M3.5 5 H9" stroke="#7A7A7A" stroke-width="1"/></svg><svg class="a" style="left:554px;top:378.82px;" width="13" height="15" viewBox="0 0 13 15"><path d="M0.5 0.5 H12 V7.5 L6.25 13.5 L0.5 7.5 Z" fill="#313335" stroke="#6A6A6A" stroke-width="1"/><path d="M3.5 5 H9" stroke="#7A7A7A" stroke-width="1"/></svg><svg class="a" style="left:554px;top:421.28999999999996px;" width="13" height="15" viewBox="0 0 13 15"><path d="M0.5 0.5 H12 V7.5 L6.25 13.5 L0.5 7.5 Z" fill="#313335" stroke="#6A6A6A" stroke-width="1"/><path d="M3.5 5 H9" stroke="#7A7A7A" stroke-width="1"/></svg><svg class="a" style="left:554px;top:442.525px;" width="13" height="15" viewBox="0 0 13 15"><path d="M0.5 0.5 H12 V7.5 L6.25 13.5 L0.5 7.5 Z" fill="#313335" stroke="#6A6A6A" stroke-width="1"/><path d="M3.5 5 H9" stroke="#7A7A7A" stroke-width="1"/></svg><svg class="a" style="left:554px;top:226.675px;" width="13" height="15" viewBox="0 0 13 15"><path d="M0.5 13.5 H12 V6.5 L6.25 0.5 L0.5 6.5 Z" fill="#313335" stroke="#6A6A6A" stroke-width="1"/><path d="M3.5 9 H9" stroke="#7A7A7A" stroke-width="1"/></svg><svg class="a" style="left:554px;top:290.38px;" width="13" height="15" viewBox="0 0 13 15"><path d="M0.5 13.5 H12 V6.5 L6.25 0.5 L0.5 6.5 Z" fill="#313335" stroke="#6A6A6A" stroke-width="1"/><path d="M3.5 9 H9" stroke="#7A7A7A" stroke-width="1"/></svg><svg class="a" style="left:554px;top:396.555px;" width="13" height="15" viewBox="0 0 13 15"><path d="M0.5 13.5 H12 V6.5 L6.25 0.5 L0.5 6.5 Z" fill="#313335" stroke="#6A6A6A" stroke-width="1"/><path d="M3.5 9 H9" stroke="#7A7A7A" stroke-width="1"/></svg><svg class="a" style="left:554px;top:460.26px;" width="13" height="15" viewBox="0 0 13 15"><path d="M0.5 13.5 H12 V6.5 L6.25 0.5 L0.5 6.5 Z" fill="#313335" stroke="#6A6A6A" stroke-width="1"/><path d="M3.5 9 H9" stroke="#7A7A7A" stroke-width="1"/></svg><svg class="a" style="left:554px;top:481.495px;" width="13" height="15" viewBox="0 0 13 15"><path d="M0.5 13.5 H12 V6.5 L6.25 0.5 L0.5 6.5 Z" fill="#313335" stroke="#6A6A6A" stroke-width="1"/><path d="M3.5 9 H9" stroke="#7A7A7A" stroke-width="1"/></svg><div class="a" style="left:589px;top:160.47px;width:1px;height:84.94px;background:#3B3B3B;"></div><div class="a" style="left:589px;top:266.645px;width:1px;height:42.47px;background:#3B3B3B;"></div><div class="a" style="left:589px;top:394.055px;width:1px;height:21.235px;background:#3B3B3B;"></div><div class="a" style="left:774px;top:479.995px;width:2px;height:19px;background:#BBBBBB;"></div><svg class="a" style="left:579px;top:460px;" width="14" height="19" viewBox="0 0 14 19"><path d="M7 0.5 A6.5 6.5 0 0 1 11.5 11.5 L10.5 13 H3.5 L2.5 11.5 A6.5 6.5 0 0 1 7 0.5 Z" fill="#F0A732"/><rect x="3.5" y="14" width="7" height="1.6" fill="#BBBBBB"/><rect x="4" y="16.5" width="6" height="1.6" fill="#BBBBBB"/></svg><svg class="a" style="left:1866px;top:119px;" width="16" height="14" viewBox="0 0 16 14"><path d="M1.5 7 L6 11.5 L14.5 2.5" fill="none" stroke="#499C54" stroke-width="2.6"/></svg><div class="a" style="left:491px;top:634px;width:1391px;height:31px;background:#313335;"></div><div class="a" style="left:491px;top:634px;width:1391px;height:1px;background:#353739;"></div><div class="t" style="left:572px;top:641.99px;font-size:16.545769433498155px;line-height:16.545769433498155px;color:#BBBBBB;font-family:'Liberation Sans',sans-serif;font-weight:normal;">Document 1/1</div><svg class="a" style="left:690px;top:645px;" width="7" height="9" viewBox="0 0 7 9"><path d="M1 0.5 L6 4.5 L1 8.5" fill="none" stroke="#6E7072" stroke-width="1"/></svg><div class="t" style="left:706px;top:642.06px;font-size:16.467717120271633px;line-height:16.467717120271633px;color:#BBBBBB;font-family:'Liberation Sans',sans-serif;font-weight:normal;">mybatis-plus:</div><svg class="a" style="left:818px;top:645px;" width="7" height="9" viewBox="0 0 7 9"><path d="M1 0.5 L6 4.5 L1 8.5" fill="none" stroke="#6E7072" stroke-width="1"/></svg><div class="t" style="left:834px;top:641.94px;font-size:16.60867000884695px;line-height:16.60867000884695px;color:#BBBBBB;font-family:'Liberation Sans',sans-serif;font-weight:normal;">mapper-locations:</div><svg class="a" style="left:980px;top:645px;" width="7" height="9" viewBox="0 0 7 9"><path d="M1 0.5 L6 4.5 L1 8.5" fill="none" stroke="#6E7072" stroke-width="1"/></svg><div class="t" style="left:996px;top:641.79px;font-size:16.786292032479462px;line-height:16.786292032479462px;color:#BBBBBB;font-family:'Liberation Sans',sans-serif;font-weight:normal;">classpath:com/dj/dor...</div><div class="a" style="left:18px;top:665px;width:1864px;height:301px;background:#3D3F41;"></div><div class="a" style="left:18px;top:664px;width:1864px;height:1px;background:#2B2B2B;"></div><div class="a" style="left:18px;top:695px;width:1864px;height:1px;background:#333537;"></div><div class="t" style="left:28px;top:675.28px;font-size:14.440005918035212px;line-height:14.440005918035212px;color:#BBBBBB;font-family:'Liberation Sans',sans-serif;font-weight:normal;">Run:</div><div class="a" style="left:68px;top:665px;width:230px;height:30px;background:#393B3D;"></div><svg class="a" style="left:85px;top:672px;" width="20" height="21" viewBox="0 0 20 21"><path d="M1 14.5 C0 7 6 2 18.5 0.5 C19.5 7 18 12 13.5 15 C9.5 17.5 4 17.5 1 14.5 Z" fill="#62A84A"/><path d="M13.5 8.8 L18.6 11.7 V17.3 L13.5 20.2 L8.4 17.3 V11.7 Z" fill="#393B3D"/><path d="M13.5 10 L17.6 12.3 V16.7 L13.5 19 L9.4 16.7 V12.3 Z" fill="#A3AEB6"/><path d="M11.7 12.9 A2.5 2.5 0 1 0 15.3 12.9" fill="none" stroke="#3A4046" stroke-width="1.1"/><path d="M13.5 11.4 V14.3" stroke="#3A4046" stroke-width="1.1"/><circle cx="17" cy="18" r="2.6" fill="#2FD12F"/></svg><div class="t" style="left:109px;top:673.46px;font-size:17.181280804864418px;line-height:17.181280804864418px;color:#BBBBBB;font-family:'Liberation Sans',sans-serif;font-weight:normal;">DormitoryApplication</div><svg class="a" style="left:275px;top:677px;" width="10" height="10" viewBox="0 0 10 10"><path d="M1 1 L9 9 M9 1 L1 9" stroke="#6E7072" stroke-width="1.3"/></svg><svg class="a" style="left:1826px;top:672px;" width="17" height="17" viewBox="0 0 17 17"><path d="M6.24 3.05 L6.44 0.46 L10.56 0.46 L10.76 3.05 L12.09 3.82 L14.43 2.69 L16.49 6.27 L14.35 7.73 L14.35 9.27 L16.49 10.73 L14.43 14.31 L12.09 13.18 L10.76 13.95 L10.56 16.54 L6.44 16.54 L6.24 13.95 L4.91 13.18 L2.57 14.31 L0.51 10.73 L2.65 9.27 L2.65 7.73 L0.51 6.27 L2.57 2.69 L4.91 3.82 Z" fill="#A9ABAD"/><circle cx="8.5" cy="8.5" r="2.5" fill="#3D3F41"/></svg><div class="a" style="left:1857px;top:680px;width:16px;height:2px;background:#A9ABAD;"></div><div class="a" style="left:54px;top:696px;width:1828px;height:37px;background:#3E4042;"></div><div class="a" style="left:54px;top:697px;width:89px;height:34px;background:#4B4E50;"></div><div class="a" style="left:143px;top:697px;width:101px;height:34px;background:#424547;"></div><div class="a" style="left:54px;top:730px;width:1828px;height:4px;background:#4D5052;"></div><svg class="a" style="left:62px;top:706px;" width="16" height="15" viewBox="0 0 16 15"><rect x="0" y="0" width="16" height="15" fill="#A9ABAD"/><path d="M4.5 3.5 L9 7.5 L4.5 11.5" fill="none" stroke="#3D3F41" stroke-width="1.8"/></svg><div class="t" style="left:84px;top:706.27px;font-size:14.446337308347529px;line-height:14.446337308347529px;color:#BBBBBB;font-family:'Liberation Sans',sans-serif;font-weight:normal;">Console</div><svg class="a" style="left:150px;top:704px;" width="19" height="19" viewBox="0 0 19 19"><path d="M4 15 L10 4 L15 15" fill="none" stroke="#E8892B" stroke-width="2"/><circle cx="10" cy="4" r="3" fill="#E8892B"/><circle cx="3.5" cy="15" r="3" fill="#E8892B"/><circle cx="15.5" cy="15" r="3" fill="#E8892B"/></svg><div class="t" style="left:172px;top:705.37px;font-size:15.514333895446882px;line-height:15.514333895446882px;color:#BBBBBB;font-family:'Liberation Sans',sans-serif;font-weight:normal;">Endpoints</div><div class="a" style="left:18px;top:697px;width:36px;height:269px;background:#3D3F41;"></div><div class="a" style="left:53px;top:697px;width:1px;height:269px;background:#323232;"></div><svg class="a" style="left:28px;top:706px;" width="18" height="19" viewBox="0 0 18 19"><path d="M13 5 A6.5 6.5 0 1 0 14.5 12" fill="none" stroke="#59A869" stroke-width="2.6"/><path d="M9 0.5 L16 2 L13 8 Z" fill="#59A869"/><rect x="11" y="11" width="7" height="7" fill="#C5C5C5"/></svg><div class="a" style="left:29px;top:741px;width:14px;height:14px;background:#DB5860;"></div><div class="a" style="left:30px;top:773px;width:4px;height:14px;background:#A9ABAD;"></div><div class="a" style="left:37px;top:773px;width:4px;height:14px;background:#A9ABAD;"></div><svg class="a" style="left:27px;top:805px;" width="18" height="15" viewBox="0 0 18 15"><path d="M0 3 H5 L6.5 0.5 H11.5 L13 3 H18 V15 H0 Z" fill="#A9ABAD"/><circle cx="9" cy="8.5" r="4" fill="#3D3F41"/><circle cx="9" cy="8.5" r="2.4" fill="#A9ABAD"/></svg><svg class="a" style="left:26px;top:837px;" width="21" height="21" viewBox="0 0 21 21"><path d="M4 4 H15 V14 H4 Z" fill="#59A869"/><path d="M2 5 H17 M1 9 H18 M2 13 H17 M7 1 L9 4 M12 1 L10 4" stroke="#59A869" stroke-width="1.8"/><path d="M13 13 L20 20 M15 20 H20 V15" fill="none" stroke="#C5C5C5" stroke-width="2"/></svg><svg class="a" style="left:27px;top:868px;" width="18" height="19" viewBox="0 0 18 19"><rect x="4" y="1" width="13" height="17" fill="none" stroke="#A9ABAD" stroke-width="1.8"/><path d="M0 9.5 H10 M6.5 5.5 L10.5 9.5 L6.5 13.5" fill="none" stroke="#DB5860" stroke-width="2.2"/></svg><div class="a" style="left:24px;top:897px;width:24px;height:1px;background:#505355;"></div><svg class="a" style="left:27px;top:911px;" width="18" height="14" viewBox="0 0 18 14"><rect x="0" y="0" width="18" height="6" fill="#A9ABAD"/><rect x="0" y="8" width="8" height="6" fill="#A9ABAD"/><rect x="10" y="8" width="8" height="6" fill="#A9ABAD"/></svg><div class="a" style="left:24px;top:952px;width:24px;height:1px;background:#505355;"></div><div class="t" style="left:31px;top:949.15px;font-size:14px;line-height:14px;color:#A9ABAD;font-family:'Liberation Sans',sans-serif;font-weight:normal;">»</div><div class="a" style="left:54px;top:734px;width:36px;height:232px;background:#3D3F41;"></div><div class="a" style="left:90px;top:734px;width:1px;height:222px;background:#323232;"></div><svg class="a" style="left:64px;top:744px;" width="14" height="18" viewBox="0 0 14 18"><path d="M7 1 V17 M1.5 6.5 L7 1 L12.5 6.5" fill="none" stroke="#5D6062" stroke-width="1.8"/></svg><svg class="a" style="left:64px;top:778px;" width="14" height="18" viewBox="0 0 14 18"><path d="M7 1 V17 M1.5 11.5 L7 17 L12.5 11.5" fill="none" stroke="#5D6062" stroke-width="1.8"/></svg><div class="a" style="left:59px;top:806px;width:28px;height:28px;border-radius:4px;background:#4B4E50"></div><svg class="a" style="left:62px;top:811px;" width="20" height="17" viewBox="0 0 20 17"><path d="M1 2 H19 M1 7.5 H16 A4 4 0 0 1 16 15.5 H9 M1 13 H6" fill="none" stroke="#A9ABAD" stroke-width="1.8"/><path d="M11 12 L8 15.5 L11 18" fill="none" stroke="#A9ABAD" stroke-width="1.8"/></svg><div class="a" style="left:59px;top:838px;width:28px;height:28px;border-radius:4px;background:#4B4E50"></div><svg class="a" style="left:62px;top:842px;" width="20" height="20" viewBox="0 0 20 20"><path d="M1 2 H9 M1 7 H9 M1 12 H9 M1 18 H19" fill="none" stroke="#A9ABAD" stroke-width="1.8"/><path d="M14 1 V13 M10 9 L14 13.5 L18 9" fill="none" stroke="#A9ABAD" stroke-width="1.8"/></svg><svg class="a" style="left:63px;top:872px;" width="18" height="20" viewBox="0 0 18 20"><rect x="4" y="0" width="10" height="5" fill="#A9ABAD"/><path d="M0 7 H18 V15 H14 V12 H4 V15 H0 Z" fill="#A9ABAD"/><rect x="4" y="14" width="10" height="6" fill="#A9ABAD"/></svg><svg class="a" style="left:64px;top:905px;" width="15" height="20" viewBox="0 0 15 20"><rect x="0" y="3" width="15" height="2" fill="#5D6062"/><rect x="5" y="0" width="5" height="3" fill="#5D6062"/><path d="M2 7 H13 L12 20 H3 Z" fill="#5D6062"/></svg><div class="a" style="left:91px;top:734px;width:1791px;height:222px;background:#2B2B2B;"></div><div class="t" style="left:106px;top:745.85px;font-size:13.5px;line-height:13.5px;color:#BBBBBB;font-family:'Liberation Mono',monospace;font-weight:normal;letter-spacing:0.900px">&lt;==        Row: 2020, 2020</div><div class="t" style="left:106px;top:767.05px;font-size:13.5px;line-height:13.5px;color:#BBBBBB;font-family:'Liberation Mono',monospace;font-weight:normal;letter-spacing:0.900px">&lt;==        Row: 2021, 2021</div><div class="t" style="left:106px;top:788.25px;font-size:13.5px;line-height:13.5px;color:#BBBBBB;font-family:'Liberation Mono',monospace;font-weight:normal;letter-spacing:0.900px">&lt;==        Row: 2022, 2022</div><div class="t" style="left:106px;top:809.45px;font-size:13.5px;line-height:13.5px;color:#BBBBBB;font-family:'Liberation Mono',monospace;font-weight:normal;letter-spacing:0.900px">&lt;==      Total: 1</div><div class="t" style="left:106px;top:830.65px;font-size:13.5px;line-height:13.5px;color:#BBBBBB;font-family:'Liberation Mono',monospace;font-weight:normal;letter-spacing:0.900px">&lt;==        Row: 2023, 2023</div><div class="t" style="left:106px;top:851.85px;font-size:13.5px;line-height:13.5px;color:#BBBBBB;font-family:'Liberation Mono',monospace;font-weight:normal;letter-spacing:0.900px">&lt;==      Total: 5</div><div class="t" style="left:106px;top:873.05px;font-size:13.5px;line-height:13.5px;color:#BBBBBB;font-family:'Liberation Mono',monospace;font-weight:normal;letter-spacing:0.900px">Closing non transactional SqlSession [org.apache.ibatis.session.defaults.DefaultSqlSession@13a21dc]</div><div class="t" style="left:106px;top:894.25px;font-size:13.5px;line-height:13.5px;color:#BBBBBB;font-family:'Liberation Mono',monospace;font-weight:normal;letter-spacing:0.900px">Closing non transactional SqlSession [org.apache.ibatis.session.defaults.DefaultSqlSession@14099ee7]</div><div class="t" style="left:106px;top:915.45px;font-size:13.5px;line-height:13.5px;color:#BBBBBB;font-family:'Liberation Mono',monospace;font-weight:normal;letter-spacing:0.900px">StuVo(id=10, userId=41, username=s001, password=null, name=<span style="display:inline-block;width:15px;font-family:'Liberation Sans',sans-serif;font-size:14px">张</span><span style="display:inline-block;width:15px;font-family:'Liberation Sans',sans-serif;font-size:14px">三</span>, phone=10086, idcard=33071919680425367001, sex=1, sno=001, gradeId=2020, gradeName=2020, classId=11, className=<span style="display:inline-block;width:15px;font-family:'Liberation Sans',sans-serif;font-size:14px">软</span><span style="display:inline-block;width:15px;font-family:'Liberation Sans',sans-serif;font-size:14px">件</span>2<span style="display:inline-block;width:15px;font-family:'Liberation Sans',sans-serif;font-size:14px">班</span>, remark=null)</div><svg class="a" style="left:778px;top:805px;" width="10" height="18" viewBox="0 0 10 18"><path d="M1 1 H4 L5 2 L6 1 H9 M5 2 V16 M1 17 H4 L5 16 L6 17 H9" fill="none" stroke="#111" stroke-width="2.2"/><path d="M1 1 H4 L5 2 L6 1 H9 M5 2 V16 M1 17 H4 L5 16 L6 17 H9" fill="none" stroke="#EEE" stroke-width="1"/></svg><div class="a" style="left:91px;top:956px;width:1791px;height:12px;background:#2B2B2B;"></div><div class="a" style="left:107px;top:958px;width:1710px;height:10px;background:#4E5052;"></div><div class="a" style="left:1871px;top:933px;width:11px;height:34px;background:#4E5052;"></div><div class="a" style="left:0px;top:968px;width:1896px;height:29px;background:#3D3F41;"></div><div class="a" style="left:0px;top:968px;width:1896px;height:1px;background:#323232;"></div><div class="a" style="left:18px;top:969px;width:88px;height:28px;background:#2E3032;"></div><svg class="a" style="left:32px;top:975px;" width="14" height="17" viewBox="0 0 14 17"><path d="M1 1 L12 8 L1 15 Z" fill="#A9ABAD"/><circle cx="11" cy="14" r="3" fill="#3BD33B"/></svg><div class="t" style="left:52px;top:979.22px;font-size:13.916732962079024px;line-height:13.916732962079024px;color:#BBBBBB;font-family:'Liberation Sans',sans-serif;font-weight:normal;"><u>4</u>: Run</div><svg class="a" style="left:122px;top:979px;" width="14" height="11" viewBox="0 0 14 11"><path d="M0 1.2 H3 M4.5 1.2 H14 M0 5.5 H3 M4.5 5.5 H14 M0 9.8 H3 M4.5 9.8 H14" stroke="#A9ABAD" stroke-width="2.2"/></svg><div class="t" style="left:141px;top:979.26px;font-size:13.87465510445408px;line-height:13.87465510445408px;color:#A9ABAD;font-family:'Liberation Sans',sans-serif;font-weight:normal;"><u>6</u>: TODO</div><svg class="a" style="left:222px;top:977px;" width="17" height="14" viewBox="0 0 17 14"><path d="M1.5 12.5 C0 7 4 2 16 0.5 C16.5 7 13 12 7 13 C5 13.3 3 13 1.5 12.5 Z" fill="#A9ABAD"/></svg><div class="t" style="left:244px;top:978.41px;font-size:14.876479809719443px;line-height:14.876479809719443px;color:#A9ABAD;font-family:'Liberation Sans',sans-serif;font-weight:normal;">Spring</div><svg class="a" style="left:314px;top:976px;" width="15" height="14" viewBox="0 0 15 14"><rect x="0" y="0" width="15" height="14" fill="#A9ABAD"/><path d="M3 3.5 L6.5 6.5 L3 9.5 M7 11 H12" fill="none" stroke="#3D3F41" stroke-width="1.6"/></svg><div class="t" style="left:335px;top:978.01px;font-size:15.349625770169126px;line-height:15.349625770169126px;color:#A9ABAD;font-family:'Liberation Sans',sans-serif;font-weight:normal;">Terminal</div><svg class="a" style="left:423px;top:976px;" width="15" height="17" viewBox="0 0 15 17"><rect x="0.8" y="0.8" width="13" height="14" fill="none" stroke="#A9ABAD" stroke-width="1.6"/><rect x="5" y="6" width="10" height="11" fill="#A9ABAD"/><path d="M7 9 H13 M8 11 V16 M11 11 V16" stroke="#3D3F41" stroke-width="1.2"/></svg><div class="t" style="left:444px;top:978.94px;font-size:14.250050603872884px;line-height:14.250050603872884px;color:#A9ABAD;font-family:'Liberation Sans',sans-serif;font-weight:normal;">Java Enterprise</div><svg class="a" style="left:1782px;top:977px;" width="16" height="16" viewBox="0 0 16 16"><circle cx="8" cy="8" r="8" fill="#C75450"/><text x="8" y="12.5" text-anchor="middle" font-size="12" font-weight="bold" font-family="Liberation Sans" fill="#fff">2</text></svg><div class="t" style="left:1804px;top:978.88px;font-size:14.323386537126996px;line-height:14.323386537126996px;color:#BBBBBB;font-family:'Liberation Sans',sans-serif;font-weight:normal;">Event Log</div><div class="a" style="left:0px;top:997px;width:1896px;height:19px;background:#3D3F41;"></div><div class="a" style="left:0px;top:997px;width:1896px;height:1px;background:#323232;"></div><svg class="a" style="left:3px;top:1002px;" width="16" height="14" viewBox="0 0 16 14"><rect x="5" y="2" width="11" height="12" fill="none" stroke="#A9ABAD" stroke-width="1.5"/><path d="M1 0 V14" stroke="#A9ABAD" stroke-width="1.2"/></svg><div class="t" style="left:31px;top:1003.12px;font-size:16.399819336522594px;line-height:16.399819336522594px;color:#BBBBBB;font-family:'Liberation Sans',sans-serif;font-weight:normal;">All files are up-to-date (7 minutes ago)</div><div class="t" style="left:1601px;top:1004.14px;font-size:15.18671162732609px;line-height:15.18671162732609px;color:#BBBBBB;font-family:'Liberation Sans',sans-serif;font-weight:normal;">18:24</div><div class="t" style="left:1654px;top:1005.39px;font-size:13.711837171933581px;line-height:13.711837171933581px;color:#BBBBBB;font-family:'Liberation Sans',sans-serif;font-weight:normal;">LF</div><div class="t" style="left:1695px;top:1004.45px;font-size:14.826254826254825px;line-height:14.826254826254825px;color:#BBBBBB;font-family:'Liberation Sans',sans-serif;font-weight:normal;">UTF-8</div><div class="t" style="left:1764px;top:1004.10px;font-size:15.241664714609199px;line-height:15.241664714609199px;color:#BBBBBB;font-family:'Liberation Sans',sans-serif;font-weight:normal;">2 spaces</div><svg class="a" style="left:1675px;top:1006px;" width="8" height="11" viewBox="0 0 8 11"><path d="M1 4.5 L4 1 L7 4.5 Z M1 7.5 L4 11 L7 7.5 Z" fill="#A9ABAD"/></svg><svg class="a" style="left:1742px;top:1006px;" width="8" height="11" viewBox="0 0 8 11"><path d="M1 4.5 L4 1 L7 4.5 Z M1 7.5 L4 11 L7 7.5 Z" fill="#A9ABAD"/></svg><svg class="a" style="left:1832px;top:1006px;" width="8" height="11" viewBox="0 0 8 11"><path d="M1 4.5 L4 1 L7 4.5 Z M1 7.5 L4 11 L7 7.5 Z" fill="#A9ABAD"/></svg><svg class="a" style="left:1854px;top:1005px;" width="16" height="13" viewBox="0 0 16 13"><path d="M6 6 V3 A3.5 3.5 0 0 1 13 3 V5" fill="none" stroke="#A9ABAD" stroke-width="1.8"/><rect x="1" y="7" width="10" height="8" fill="#A9ABAD"/></svg><svg class="a" style="left:1884px;top:1003px;" width="12" height="13" viewBox="0 0 12 13"><rect x="2" y="1" width="10" height="12" fill="none" stroke="#A9ABAD" stroke-width="1.5"/><circle cx="6" cy="7" r="2" fill="#A9ABAD"/></svg><div class="a" style="left:1684px;top:591px;width:212px;height:29px;background:#FFFFFF;"></div><svg class="a" style="left:1653px;top:585px;" width="40" height="38" viewBox="0 0 40 38"><g transform="rotate(-12 20 19)"><rect x="4" y="4" width="32" height="30" rx="5" fill="#E8541E"/><path d="M28 11 C24 7 12 8 12 14 C12 20 27 17 27 24 C27 30 14 30 10 26" fill="none" stroke="#FFFFFF" stroke-width="5" stroke-linecap="round"/></g></svg><svg class="a" style="left:1697px;top:597px;" width="19" height="19" viewBox="0 0 19 19"><rect x="1.5" y="5" width="16" height="9" fill="none" stroke="#1A73C9" stroke-width="3"/><path d="M9.5 0 V19" stroke="#1A73C9" stroke-width="3"/></svg><svg class="a" style="left:1726px;top:597px;" width="17" height="18" viewBox="0 0 17 18"><circle cx="4" cy="5" r="2.5" fill="none" stroke="#1A73C9" stroke-width="1.6"/><path d="M13 6 C15 8 14 13 10 16" fill="none" stroke="#1A73C9" stroke-width="3"/><circle cx="13" cy="7" r="2.2" fill="#1A73C9"/></svg><svg class="a" style="left:1750px;top:596px;" width="21" height="21" viewBox="0 0 21 21"><circle cx="10.5" cy="10.5" r="9" fill="none" stroke="#1A73C9" stroke-width="2.2"/><circle cx="7.5" cy="8" r="1.5" fill="#1A73C9"/><circle cx="13.5" cy="8" r="1.5" fill="#1A73C9"/><path d="M6 12.5 C8 16 13 16 15 12.5" fill="none" stroke="#1A73C9" stroke-width="2"/></svg><svg class="a" style="left:1780px;top:596px;" width="16" height="21" viewBox="0 0 16 21"><rect x="4.5" y="0" width="7" height="13" rx="3.5" fill="#1A73C9"/><path d="M1.5 9 C1.5 16 14.5 16 14.5 9 M8 15 V20 M4 20 H12" fill="none" stroke="#1A73C9" stroke-width="2"/></svg><svg class="a" style="left:1805px;top:598px;" width="21" height="16" viewBox="0 0 21 16"><rect x="1" y="1" width="19" height="14" rx="1.5" fill="none" stroke="#1A73C9" stroke-width="2"/><path d="M4 5 H17 M4 8 H17 M6 11.5 H15" stroke="#1A73C9" stroke-width="1.6" stroke-dasharray="2 1.2"/></svg><svg class="a" style="left:1833px;top:595px;" width="21" height="21" viewBox="0 0 21 21"><circle cx="7" cy="4" r="3.5" fill="#B9C7D6"/><path d="M1 20 V12 C1 9 13 9 13 12 V20 Z" fill="#B9C7D6"/><rect x="9" y="12" width="12" height="8" fill="#FFF" stroke="#B9C7D6" stroke-width="1.2"/></svg><svg class="a" style="left:1860px;top:597px;" width="19" height="18" viewBox="0 0 19 18"><path d="M6 0.5 L0.5 4 L3 8.5 L5 7.5 V17.5 H14 V7.5 L16 8.5 L18.5 4 L13 0.5 C12 3 7 3 6 0.5 Z" fill="#1A73C9"/></svg><svg class="a" style="left:1887px;top:597px;" width="9" height="18" viewBox="0 0 9 18"><rect x="0" y="0" width="8" height="7" rx="1" fill="#1A73C9"/><rect x="0" y="10" width="8" height="7" rx="1" fill="#1A73C9"/></svg><div class="a" style="left:1704px;top:11px;width:130px;height:52px;border-radius:26px;background:#1F212B;box-shadow:0 0 2px rgba(0,0,0,0.35)"></div><div class="a" style="left:1779px;top:1px;width:72px;height:72px;border-radius:50%;background:linear-gradient(180deg,#575B68 0%,#4A4D5A 40%,#343745 75%,#2E3140 100%);box-shadow:0 0 3px rgba(0,0,0,0.5)"></div><svg class="a" style="left:1779px;top:1px;" width="72" height="72" viewBox="0 0 72 72"><defs><linearGradient id="rg" x1="0" y1="0" x2="0" y2="1"><stop offset="0" stop-color="#3CC7B5"/><stop offset="0.6" stop-color="#7DD36A"/><stop offset="1" stop-color="#E3D44A"/></linearGradient></defs><path d="M36 6 A30 30 0 0 1 62 51 A30 30 0 0 1 30 65" fill="none" stroke="url(#rg)" stroke-width="2.5"/></svg><div class="a" style="left:1704px;top:11px;width:0;height:0"></div><svg class="a" style="left:1718px;top:19px;" width="9" height="9" viewBox="0 0 9 9"><path d="M4.5 0 L9 5 H6 V9 H3 V5 H0 Z" fill="#3BA3E0"/></svg><svg class="a" style="left:1718px;top:46px;" width="9" height="9" viewBox="0 0 9 9"><path d="M4.5 9 L9 4 H6 V0 H3 V4 H0 Z" fill="#3FC24A"/></svg><div class="t" style="left:1735px;top:18.04px;font-size:12.949640287769785px;line-height:12.949640287769785px;color:#E8E8EC;font-family:'Liberation Sans',sans-serif;font-weight:bold;">1.3</div><div class="t" style="left:1755px;top:18.45px;font-size:12.458094517140694px;line-height:12.458094517140694px;color:#A8A8B0;font-family:'Liberation Sans',sans-serif;font-weight:normal;">K/s</div><div class="t" style="left:1734px;top:45.84px;font-size:12.589928057553958px;line-height:12.589928057553958px;color:#E8E8EC;font-family:'Liberation Sans',sans-serif;font-weight:bold;">0.1</div><div class="t" style="left:1755px;top:45.95px;font-size:12.458094517140694px;line-height:12.458094517140694px;color:#A8A8B0;font-family:'Liberation Sans',sans-serif;font-weight:normal;">K/s</div><svg class="a" style="left:1815px;top:2px;" width="13" height="13" viewBox="0 0 13 13"><rect x="3.5" y="0.5" width="9" height="9" fill="none" stroke="#1A1A22"/><rect x="0.5" y="3.5" width="9" height="9" fill="none" stroke="#1A1A22"/></svg><div class="t" style="left:1794px;top:21.68px;font-size:30.5px;line-height:30.5px;color:#DCDCE0;font-family:'Liberation Sans',sans-serif;font-weight:normal;letter-spacing:-2px">55</div><div class="t" style="left:1828px;top:37.34px;font-size:12px;line-height:12px;color:#DCDCE0;font-family:'Liberation Sans',sans-serif;font-weight:normal;">%</div></body></html>
